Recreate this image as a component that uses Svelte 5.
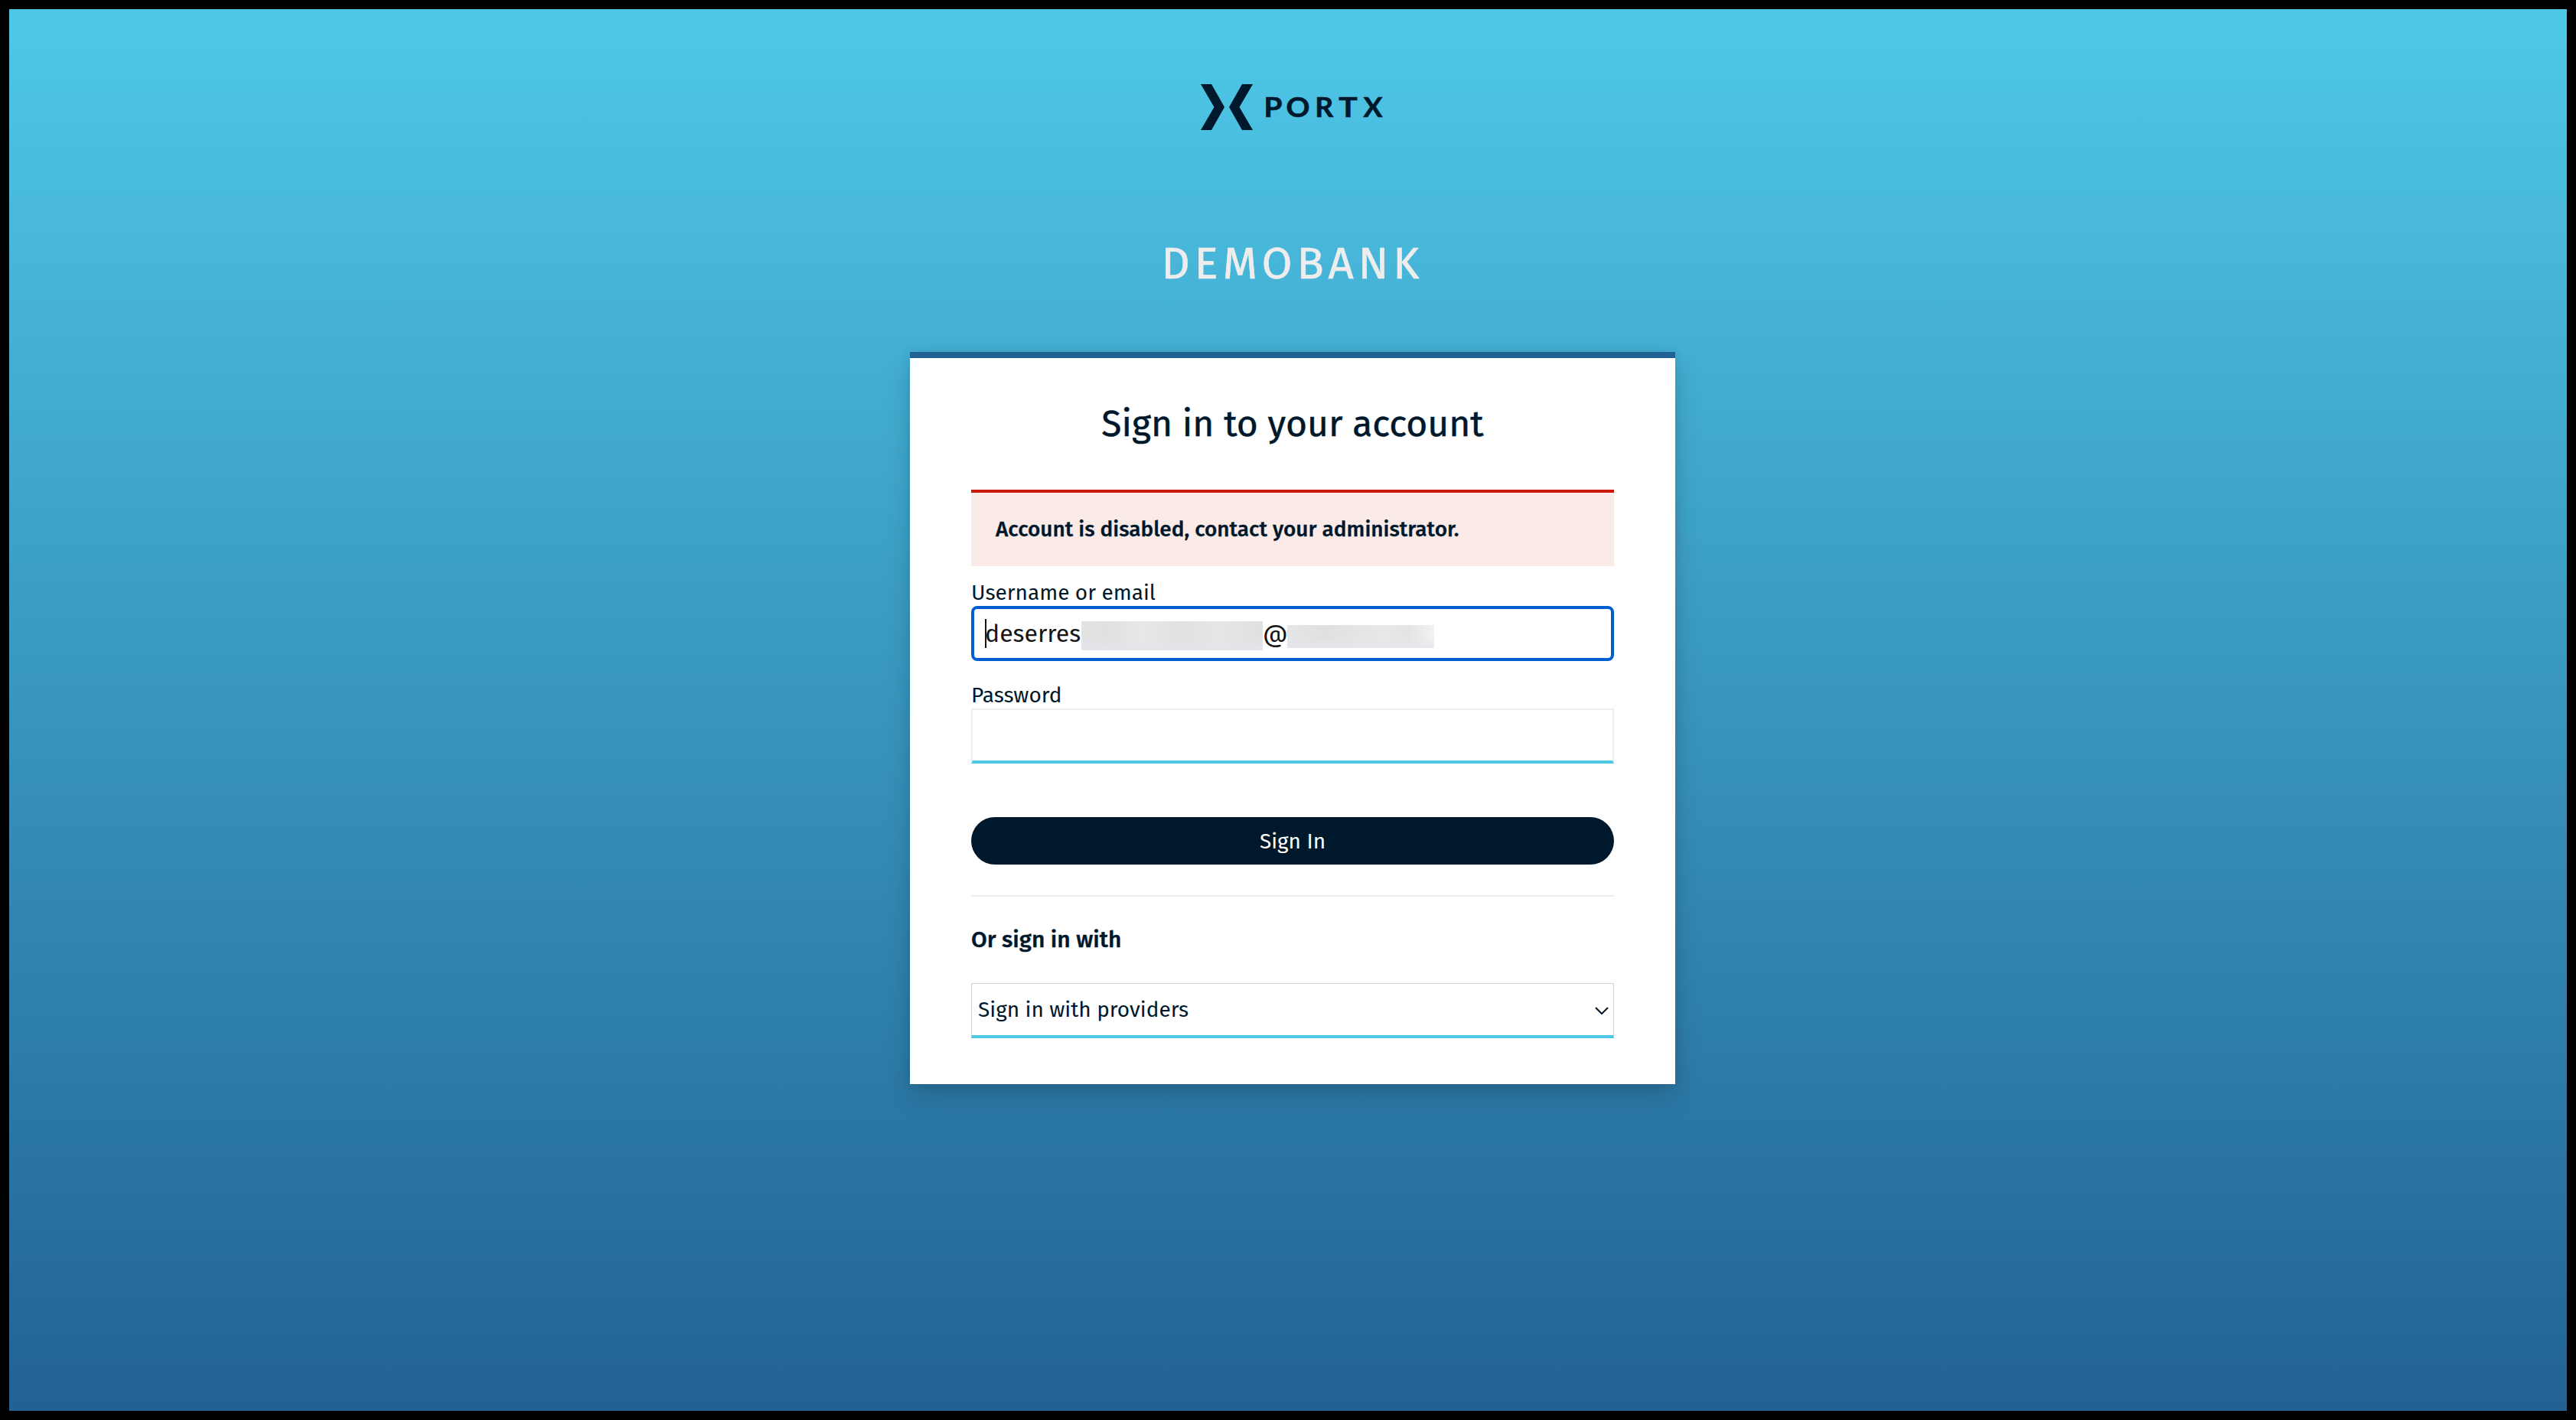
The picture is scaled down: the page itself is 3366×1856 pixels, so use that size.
<script>
	let error = 'Account is disabled, contact your administrator.';
	let realm = 'DEMOBANK';
	let user = 'deserres';
	let provider = 'Sign in with providers';

	// x position and drawn width of every letter in the wordmark
	const wordmark = [
		['P', 82.5, 24],
		['O', 111.5, 31],
		['R', 149.3, 24],
		['T', 180.3, 24.5],
		['X', 212.5, 25]
	];
</script>

<main>
	<div class="login">
		<svg class="logo" width="240" height="60" viewBox="0 0 240 60" role="img" aria-label="PortX">
			<path d="M0 0h14l17 30-17 30H0l17.5-30z" />
			<path d="M68 0H54L37 30l17 30h14L50.5 30z" />
			{#each wordmark as [letter, x, width]}
				<text {x} y="42.6" textLength={width} lengthAdjust="spacingAndGlyphs">{letter}</text>
			{/each}
		</svg>

		<h1 class="realm">{realm}</h1>

		<div class="card">
			<h2 class="title">Sign in to your account</h2>

			{#if error}
				<div class="alert">{error}</div>
			{/if}

			<form on:submit|preventDefault>
				<div class="label">Username or email</div>
				<div class="input focused">
					<span class="caret"></span>
					<span class="user">{user}</span>
					<span class="mask name"></span>
					<span class="at">@</span>
					<span class="mask domain"></span>
				</div>

				<div class="label password">Password</div>
				<div class="input"></div>

				<button class="submit">Sign In</button>
			</form>

			<hr />

			<h4 class="or">Or sign in with</h4>
			<div class="select">
				<span>{provider}</span>
				<svg class="chevron" width="18" height="10" viewBox="0 0 18 10">
					<path d="M1 1l8 8 8-8" />
				</svg>
			</div>
		</div>
	</div>
</main>

<style>
	:global(body) {
		margin: 0;
		background: #000;
	}

	main {
		box-sizing: border-box;
		width: 3366px;
		height: 1856px;
		border: 12px solid #000;
		background: linear-gradient(#4fc8e8, #216293) padding-box;
		font-family: 'Fira Sans', 'Open Sans', 'Noto Sans', sans-serif;
		color: #00182b;
	}

	.login {
		display: flex;
		flex-direction: column;
		align-items: center;
		padding: 98px 0 0 12px;
	}

	.logo {
		display: block;
		fill: #00182b;
	}
	.logo text {
		font-family: Lato, sans-serif;
		font-size: 36px;
		font-weight: 700;
		stroke: #00182b;
		stroke-width: 0.6px;
	}

	.realm {
		margin: 135px 0 75px;
		font-size: 58px;
		font-weight: 400;
		line-height: 80px;
		letter-spacing: 6px;
		color: #ededed;
		-webkit-text-stroke: 0.6px;
	}

	.card {
		box-sizing: border-box;
		width: 1000px;
		padding: 56px 80px 60px;
		border-top: 8px solid #216293;
		background: #fff;
		box-shadow: 0 16px 32px rgba(3, 3, 3, 0.16), 0 0 12px rgba(3, 3, 3, 0.08);
	}

	.title {
		margin: 0 0 56px;
		font-size: 48px;
		font-weight: 400;
		line-height: 60px;
		text-align: center;
		-webkit-text-stroke: 0.5px;
	}

	.alert {
		margin-bottom: 18px;
		padding: 28px 32px;
		border-top: 4px solid #c9190b;
		background: #faeae8;
		font-size: 28px;
		font-weight: 500;
		line-height: 40px;
		-webkit-text-stroke: 0.3px;
	}

	.label {
		font-size: 28px;
		line-height: 34px;
	}
	.label.password {
		margin-top: 28px;
	}

	.input {
		box-sizing: border-box;
		display: flex;
		align-items: center;
		height: 72px;
		border: 2px solid #ededed;
		border-bottom: 4px solid #4fc8e8;
		font-size: 32px;
		line-height: 42px;
		color: #151515;
	}
	.input.focused {
		padding-left: 14px;
		border: 4px solid #005fcf;
		border-radius: 8px;
	}

	.caret {
		width: 2px;
		height: 38px;
		margin-right: -2px;
		background: #151515;
	}
	.user {
		width: 126px;
	}
	.at {
		width: 32px;
		text-align: center;
	}
	.mask.name {
		width: 237px;
		height: 38px;
		margin-top: 6px;
		background: linear-gradient(rgba(228, 229, 236, 0) 60%, #e4e5ec), linear-gradient(90deg, #e3e3e4, #e0e0e1 15%, #e8e8ea 32%, #e1e1e1 55%, #e6e6e7 75%, #e0e0e1);
	}
	.mask.domain {
		width: 192px;
		height: 30px;
		margin-top: 8px;
		background: linear-gradient(rgba(230, 231, 237, 0) 50%, rgba(230, 231, 237, 0.8)), linear-gradient(90deg, #e5e5e5, #e0e0e0 25%, #e8e8e9 65%, #e4e4e4 82%, #f2f2f3);
	}

	.submit {
		display: block;
		width: 100%;
		height: 62px;
		margin: 70px 0 40px;
		padding: 0;
		border: 0;
		border-radius: 31px;
		background: #00182b;
		font: inherit;
		font-size: 28px;
		color: #fff;
	}

	hr {
		height: 2px;
		margin: 0 0 36px;
		border: 0;
		background: #ededed;
	}

	.or {
		margin: 0 0 37px;
		font-size: 30px;
		font-weight: 500;
		line-height: 40px;
		-webkit-text-stroke: 0.4px;
	}

	.select {
		box-sizing: border-box;
		display: flex;
		align-items: center;
		justify-content: space-between;
		height: 72px;
		padding: 0 6px 0 8px;
		border: 1px solid #d2d2d2;
		border-bottom: 4px solid #4fc8e8;
		font-size: 28px;
	}
	.chevron {
		margin-top: 3px;
		fill: none;
		stroke: #00182b;
		stroke-width: 2;
	}
</style>
